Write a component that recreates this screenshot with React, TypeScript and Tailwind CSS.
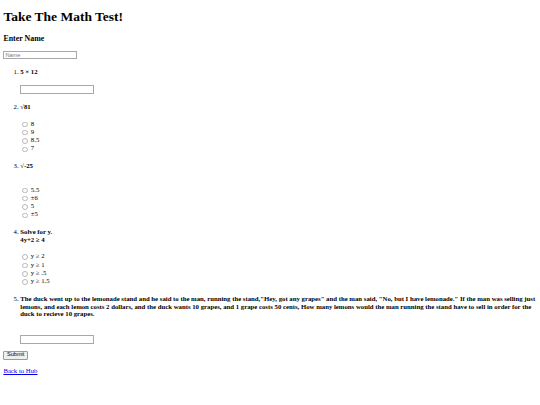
import React from "react";

const serif = "font-['Liberation_Serif','Times_New_Roman',serif]";
const sans = "font-['Liberation_Sans',Arial,sans-serif]";

function Radio({ label }: { label: string }) {
  return (
    <div className="flex items-center h-[8.33px] leading-none">
      <span className="ml-[2.1px] mr-[1.3px] mt-[1px] inline-block w-[5.5px] h-[5.5px] rounded-full border border-[#b8b8b8] bg-white" />
      <span className="ml-[1.7px]">{label}</span>
    </div>
  );
}

function TextBox() {
  return (
    <div className="w-[74px] h-[8.9px] border border-[#a9a9a9] bg-white" />
  );
}

const h4 = "text-[6.75px] font-bold my-[8.98px] leading-[1.149]";

export default function App() {
  const q5 =
    'The duck went up to the lemonade stand and he said to the man, running the stand,"Hey, got any grapes" and the man said, "No, but I have lemonade." If the man was selling just lemons, and each lemon costs 2 dollars, and the duck wants 10 grapes, and 1 grape costs 50 cents, How many lemons would the man running the stand have to sell in order for the duck to recieve 10 grapes.';
  return (
    <div className={`${serif} text-black bg-white px-[3.375px] text-[6.75px] leading-[1.149] min-h-[405px] flow-root`}>
      <h1 className="text-[13.5px] font-bold my-[9.05px] leading-[1.149]">Take The Math Test!</h1>
      <h3 className="text-[7.9px] font-bold my-[7.9px] leading-[1.149]">Enter Name</h3>
      <div className={`w-[74px] h-[8.9px] border border-[#a9a9a9] bg-white flex items-center pl-[1px] ${sans} text-[5.6px] text-[#7a7a7a]`}>
        Name
      </div>
      <ol className="list-decimal pl-[16.875px] my-[6.75px]">
        <li>
          <h4 className={h4}>5 × 12</h4>
          <TextBox />
        </li>
        <li>
          <h4 className={h4}>√81</h4>
          <Radio label="8" />
          <Radio label="9" />
          <Radio label="8.5" />
          <Radio label="7" />
        </li>
        <li>
          <h4 className={h4}>√-25</h4>
          <div className="h-[7px]" />
          <Radio label="5.5" />
          <Radio label="±6" />
          <Radio label="5" />
          <Radio label="±5" />
        </li>
        <li>
          <h4 className={h4}>
            Solve for y.
            <br />
            4y+2 ≥ 4
          </h4>
          <Radio label="y ≥ 2" />
          <Radio label="y ≥ 1" />
          <Radio label="y ≥ .5" />
          <Radio label="y ≥ 1.5" />
        </li>
        <li>
          <h4 className={h4}>{q5}</h4>
          <div className="h-[7.76px]" />
          <TextBox />
        </li>
      </ol>
      <button
        className={`${sans} text-[5.6px] leading-none h-[8.9px] px-[2.6px] bg-[#efefef] border border-[#9a9a9a] rounded-[1px] text-black`}
      >
        Submit
      </button>
      <p className="my-[6.75px] mt-[7.5px]">
        <a href="#" className="text-[#0000ee] underline">
          Back to Hub
        </a>
      </p>
    </div>
  );
}
